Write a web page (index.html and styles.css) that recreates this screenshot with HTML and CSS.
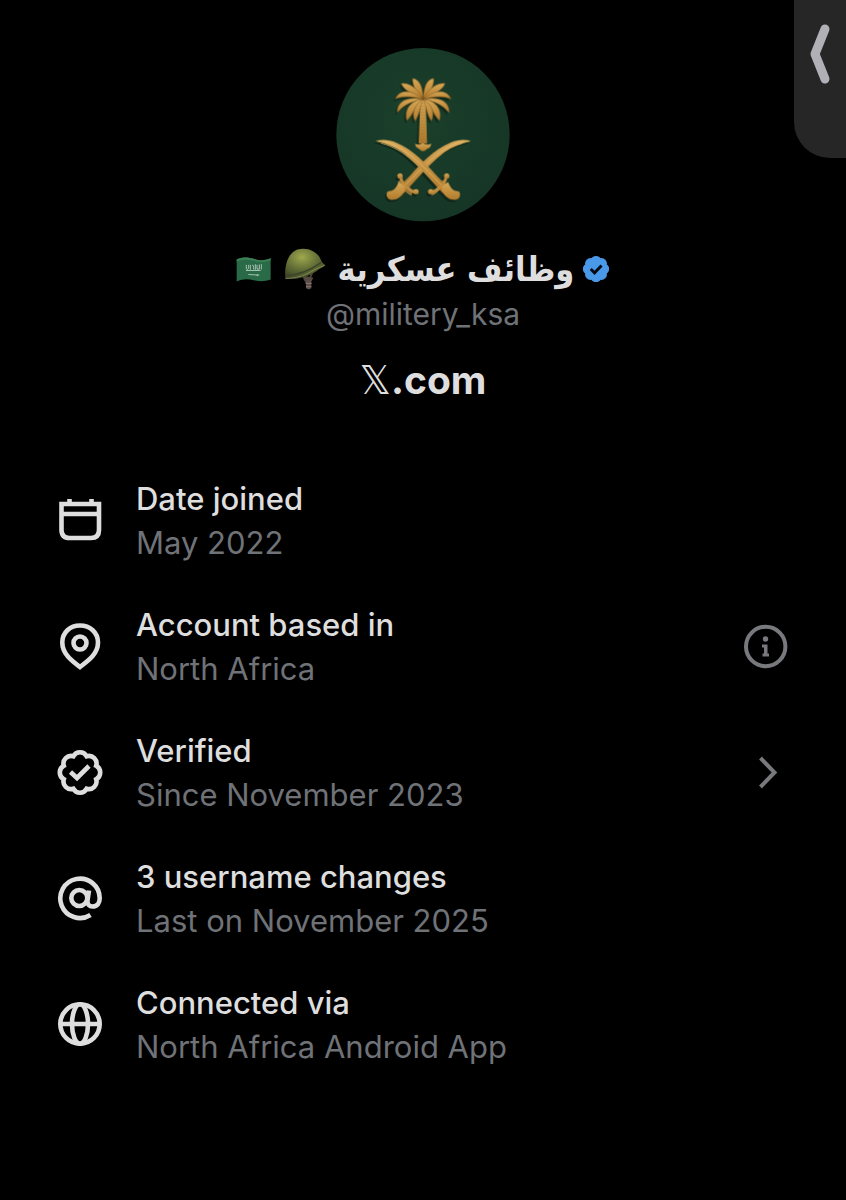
FILE: index.html
```html
<!DOCTYPE html>
<html lang="en">
<head>
  <meta charset="UTF-8" />
  <meta name="viewport" content="width=device-width, initial-scale=1" />
  <title>About this account</title>
  <link rel="stylesheet" href="styles.css">
</head>
<body>
  <!-- Edge panel handle -->
  <button class="edge-handle" type="button" aria-label="Open panel">
    <svg viewBox="0 0 52 158" aria-hidden="true"><path d="M31 29 L21 54 L31 79" /></svg>
  </button>

  <main class="about">
    <!-- Profile header -->
    <header class="profile">
      <svg class="avatar" viewBox="30 30 522 522" role="img" aria-label="Palm tree over crossed swords">
        <defs>
          <radialGradient id="green" cx="45%" cy="40%" r="65%">
            <stop offset="0" stop-color="#1a402b" />
            <stop offset="1" stop-color="#163526" />
          </radialGradient>
          <linearGradient id="gold" x1="0" y1="0" x2="0" y2="1">
            <stop offset="0" stop-color="#d9aa58" />
            <stop offset="1" stop-color="#b07a2c" />
          </linearGradient>
          <g id="sword">
            <path d="M149 309 C168 303 190 305 210 314 C262 336 300 378 331 412 L370 452 L350 465 L316 428 C284 392 262 370 230 344 C205 325 178 317 149 309 Z" />
            <path d="M346 444 L366 432 C374 448 380 459 393 459 C405 458 405 477 395 483 C380 490 362 482 350 463 Z" />
            <path d="M312 462 Q326 464 338 450 Q358 436 361 414" fill="none" stroke="#c08c3e" stroke-width="9" stroke-linecap="round" />
            <circle cx="314" cy="461" r="8" />
            <circle cx="362" cy="414" r="8" />
            <path d="M170 309 C240 325 290 385 345 440" fill="none" stroke="#e6c583" stroke-width="2" />
          </g>
          <g id="fronds">
            <path d="M291 181 C291 153 283 124 260 121 C258 142 270 163 291 181 Z" />
            <path d="M291 183 C275 153 253 133 226 136 C232 157 260 168 291 183 Z" />
            <path d="M291 184 C259 156 222 151 208 183 C230 173 260 175 291 184 Z" />
            <path d="M291 184 C248 174 211 188 214 224 C232 201 258 190 291 184 Z" />
            <path d="M291 184 C257 185 232 214 243 248 C264 226 266 202 291 184 Z" />
            <path d="M291 184 C269 197 254 223 267 249 C282 229 281 205 291 184 Z" />
          </g>
        </defs>
        <circle cx="291" cy="290" r="260" fill="url(#green)" />
        <g fill="#0c2219" transform="translate(-5 7)" opacity=".7">
          <use href="#sword" /><use href="#sword" transform="matrix(-1 0 0 1 584 0)" />
          <use href="#fronds" /><use href="#fronds" transform="matrix(-1 0 0 1 583 0)" />
          <path d="M281 190 H301 L302 320 H278 Z" />
        </g>
        <g fill="url(#gold)">
          <use href="#sword" transform="matrix(-1 0 0 1 584 0)" />
          <use href="#sword" />
          <path d="M283 186 H299 L303 317 H278 Z" />
          <path d="M267 317 Q277 324 290 315 Q304 324 316 317 Q314 331 302 333 Q291 346 280 333 Q269 330 267 317 Z" />
        </g>
        <path d="M290 195 V315" stroke="#7d5721" stroke-width="17" stroke-dasharray="2 7" opacity=".65" />
        <g fill="url(#gold)" stroke="#7b551f" stroke-width="1.5">
          <use href="#fronds" /><use href="#fronds" transform="matrix(-1 0 0 1 583 0)" />
        </g>
      </svg>

      <h1 class="name" dir="rtl">
        <svg class="badge" viewBox="0 0 48 48" role="img" aria-label="Verified account">
          <path d="M40.2 30.7 A7.4 7.4 0 0 1 30.7 40.2 A7.4 7.4 0 0 1 17.3 40.2 A7.4 7.4 0 0 1 7.8 30.7 A7.4 7.4 0 0 1 7.8 17.3 A7.4 7.4 0 0 1 17.3 7.8 A7.4 7.4 0 0 1 30.7 7.8 A7.4 7.4 0 0 1 40.2 17.3 A7.4 7.4 0 0 1 40.2 30.7 Z" fill="#4a99e9" stroke="#4a99e9" stroke-width="4" />
          <path d="M15 24 L21.5 30.5 L33.5 18" fill="none" stroke="#050b12" stroke-width="5" />
        </svg>
        <span lang="ar">وظائف عسكرية</span>
        <svg class="helmet" viewBox="180 34 126 132" role="img" aria-label="Military helmet">
          <defs>
            <radialGradient id="shell" cx="42%" cy="28%" r="75%">
              <stop offset="0" stop-color="#a0a84c" />
              <stop offset=".5" stop-color="#667238" />
              <stop offset="1" stop-color="#394326" />
            </radialGradient>
          </defs>
          <path d="M232 110 L248 143 M266 108 L252 141" stroke="#4b4039" stroke-width="6" fill="none" />
          <path d="M240 120 L268 126 L263 136 L241 134 Z" fill="#554942" />
          <path d="M246 133 h16 v24 q-8 8 -16 0 Z" fill="#5d4e49" />
          <path d="M245 143 h18 M246 153 h16" stroke="#8b7870" stroke-width="3" />
          <path d="M184 130 C180 80 197 39 236 39 C266 38 286 57 292 76 C294 82 301 85 304 89 C298 96 287 99 278 106 C248 126 217 132 184 130 Z" fill="url(#shell)" />
          <path d="M186 119 C223 119 256 106 291 81" fill="none" stroke="#3c4528" stroke-width="4" />
          <path d="M185 128 C222 128 248 117 270 103 C280 97 292 94 302 89" fill="none" stroke="#9b9c5b" stroke-width="2" />
        </svg>
        <svg class="flag" viewBox="34 60 108 80" role="img" aria-label="Flag of Saudi Arabia">
          <path d="M36 70 C56 61 73 64 87 68 C107 74 121 73 138 66 V130 C120 137 104 136 87 132 C69 128 53 128 36 136 Z" fill="#286b46" />
          <path d="M36 70 C56 61 73 64 87 68 C107 74 121 73 138 66 V72 C120 79 104 78 87 74 C69 69 53 70 36 76 Z" fill="#3b8057" />
          <path d="M65 86 v12 q4 5 7 -2 v-10 M77 86 v15 M82 88 q6 -4 5 12 M92 84 v17 M97 86 v13 h7 v-14 M110 84 v16 M64 103 h44" fill="none" stroke="#bed0c5" stroke-width="2.5" />
          <path d="M71 115 L104 117 M98 114 v6" stroke="#bed0c5" stroke-width="2.5" />
        </svg>
      </h1>
      <p class="handle">@militery_ksa</p>
      <p class="site"><span class="site-x">𝕏</span>.com</p>
    </header>

    <!-- Account facts -->
    <ul class="facts">
      <li class="fact">
        <svg class="icon" viewBox="0 0 48 48" aria-hidden="true">
          <path d="M5.5 7 H43 V33 Q43 41 35 41 H13.5 Q5.5 41 5.5 33 Z M5.5 17 H43 M13.5 2 V7 M35.5 2 V7" />
        </svg>
        <div class="fact-text">
          <h2>Date joined</h2>
          <p>May 2022</p>
        </div>
      </li>
      <li class="fact">
        <svg class="icon" viewBox="0 0 48 48" aria-hidden="true">
          <path d="M24 44 C16 38 6.3 31 6.3 19.5 C6.3 9.5 14 2.5 24 2.5 C34 2.5 42 9.5 42 19.5 C42 31 32 38 24 44 Z" />
          <circle cx="24" cy="20" r="6.5" />
        </svg>
        <div class="fact-text">
          <h2>Account based in</h2>
          <p>North Africa</p>
        </div>
        <button class="action" type="button" aria-label="About this location">
          <svg class="icon" viewBox="0 0 48 48" aria-hidden="true">
            <circle cx="23.7" cy="23.5" r="19.7" />
            <circle class="solid" cx="23.5" cy="16" r="2.7" />
            <path class="solid" d="M20 21.5 H25.5 V30.5 H27 V33.5 H20.5 V30.5 H22 V24.5 H20 Z" />
          </svg>
        </button>
      </li>
      <li class="fact">
        <svg class="icon" viewBox="0 0 48 48" aria-hidden="true">
          <path d="M40.2 30.2 A7.6 7.6 0 0 1 30.7 39.7 A7.6 7.6 0 0 1 17.3 39.7 A7.6 7.6 0 0 1 7.8 30.2 A7.6 7.6 0 0 1 7.8 16.8 A7.6 7.6 0 0 1 17.3 7.3 A7.6 7.6 0 0 1 30.7 7.3 A7.6 7.6 0 0 1 40.2 16.8 A7.6 7.6 0 0 1 40.2 30.2 Z" />
          <path d="M14.5 23 L21 29 L33 17" />
        </svg>
        <div class="fact-text">
          <h2>Verified</h2>
          <p>Since November 2023</p>
        </div>
        <button class="action" type="button" aria-label="Verification details">
          <svg class="icon" viewBox="0 0 48 48" aria-hidden="true"><path d="M18.5 9 L32.5 23.5 L18.5 38" /></svg>
        </button>
      </li>
      <li class="fact">
        <svg class="icon" viewBox="0 0 48 48" aria-hidden="true">
          <circle cx="23.3" cy="23" r="8" />
          <path d="M33 15.5 L31.5 25.5 C31 29.5 33.5 31.5 36.5 31.5 C41.5 31.5 43.7 27.5 43.7 23.3 A19.7 19.7 0 1 0 34.5 40" />
        </svg>
        <div class="fact-text">
          <h2>3 username changes</h2>
          <p>Last on November 2025</p>
        </div>
      </li>
      <li class="fact">
        <svg class="icon" viewBox="0 0 48 48" aria-hidden="true">
          <circle cx="24" cy="23" r="19.7" />
          <ellipse cx="24" cy="23" rx="8" ry="19.7" />
          <path d="M4.5 23 H43.5" />
        </svg>
        <div class="fact-text">
          <h2>Connected via</h2>
          <p>North Africa Android App</p>
        </div>
      </li>
    </ul>
  </main>
</body>
</html>
```
FILE: styles.css
```css
html, body { margin: 0; padding: 0; }
body {
  background: #000;
  color: #dedede;
  font-family: Inter, "Liberation Sans", sans-serif;
  font-size: 31px;
  line-height: 44px;
  min-height: 100vh;
  position: relative;
  overflow-x: hidden;
}
h1, h2, p, ul { margin: 0; padding: 0; }
button { background: none; border: none; padding: 0; cursor: pointer; }
svg { display: block; flex: none; }

/* Edge panel handle, floats over the page */
.edge-handle {
  position: absolute;
  top: 0;
  right: 0;
  width: 52px;
  height: 158px;
  background: #262626;
  border-radius: 0 0 0 36px;
}
.edge-handle path {
  fill: none;
  stroke: #b1b0b6;
  stroke-width: 9;
  stroke-linecap: round;
  stroke-linejoin: round;
}

/* Profile header */
.about { padding: 48px 56px; }
.profile {
  display: flex;
  flex-direction: column;
  align-items: center;
}
.avatar { width: 174px; height: 174px; }
.name {
  display: flex;
  align-items: center;
  gap: 12px;
  margin-top: 24px;
  font-family: "DejaVu Sans Condensed", "DejaVu Sans", sans-serif;
  font-size: 34px;
  line-height: 46px;
}
.badge { width: 28px; height: 28px; margin-left: -4px; }
.helmet { width: 42px; height: 44px; }
.flag { width: 36px; height: 27px; }
.handle { color: #6f7277; font-size: 30px; }
.site {
  margin-top: 22px;
  font-size: 39px;
  font-weight: 700;
}
.site-x { font-family: "DejaVu Sans", sans-serif; font-weight: 400; }

/* Account facts */
.facts {
  display: flex;
  flex-direction: column;
  gap: 38px;
  margin-top: 74px;
  list-style: none;
}
.fact { display: flex; align-items: center; gap: 32px; }
.fact-text { flex: 1; }
.fact h2 { font-size: 31px; font-weight: 500; }
.fact p { color: #6f7277; }
.icon {
  width: 48px;
  height: 48px;
  fill: none;
  stroke: #dedede;
  stroke-width: 4.6;
}
.action .icon { stroke: #77797d; stroke-width: 4; }
.action .solid { fill: #77797d; stroke: none; }
```
